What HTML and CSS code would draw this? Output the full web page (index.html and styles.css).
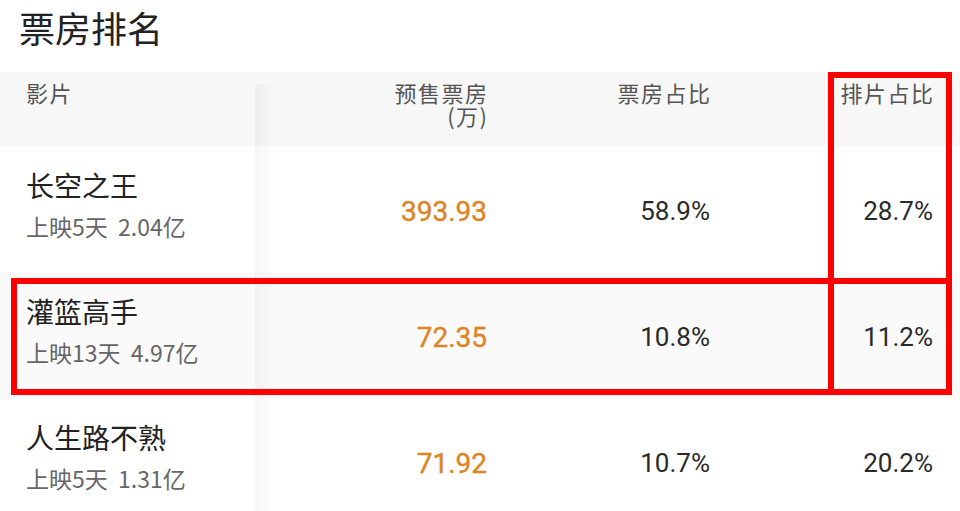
FILE: index.html
```html
<!DOCTYPE html>
<html lang="zh-CN">

<head>
    <meta charset="UTF-8">
    <meta name="viewport" content="width=device-width, initial-scale=1.0">
    <title>票房排名</title>
    <link rel="stylesheet" href="styles.css">
</head>

<body>
    <h1 class="title">票房排名</h1>

    <div class="rank-table">
        <div class="row head">
            <div class="cell name-col">影片</div>
            <div class="cell num-col">
                <span class="head-line">预售票房</span>
                <span class="head-line">(万)</span>
            </div>
            <div class="cell num-col">票房占比</div>
            <div class="cell num-col">排片占比</div>
        </div>

        <div class="row">
            <div class="cell name-col">
                <div class="movie">长空之王</div>
                <div class="meta">上映5天&nbsp; 2.04亿</div>
            </div>
            <div class="cell num-col presale">393.93</div>
            <div class="cell num-col pct">58.9%</div>
            <div class="cell num-col pct">28.7%</div>
        </div>

        <div class="row alt">
            <div class="cell name-col">
                <div class="movie">灌篮高手</div>
                <div class="meta">上映13天&nbsp; 4.97亿</div>
            </div>
            <div class="cell num-col presale">72.35</div>
            <div class="cell num-col pct">10.8%</div>
            <div class="cell num-col pct">11.2%</div>
        </div>

        <div class="row">
            <div class="cell name-col">
                <div class="movie">人生路不熟</div>
                <div class="meta">上映5天&nbsp; 1.31亿</div>
            </div>
            <div class="cell num-col presale">71.92</div>
            <div class="cell num-col pct">10.7%</div>
            <div class="cell num-col pct">20.2%</div>
        </div>

        <!-- red highlight marks drawn over the table -->
        <div class="mark mark-col"></div>
        <div class="mark mark-row"></div>
        <div class="mark mark-cell"></div>
    </div>
</body>

</html>
```

FILE: styles.css
```css
body {
    margin: 0;
    padding: 0;
    background: #FFF;
    font-family: "Noto Sans CJK SC", "Noto Sans", sans-serif;
    color: #222;
    overflow: hidden;
}

.title {
    margin: 0;
    padding: 0 0 0 19px;
    height: 72px;
    font-size: 36px;
    font-weight: 400;
    line-height: 54px;
    color: #222;
}

.rank-table {
    position: relative;
}

.row {
    display: grid;
    grid-template-columns: 255px 232px 223px 223px;
    padding-right: 27px;
    height: 126px;
}

.row.head {
    height: 74px;
    background: #F7F7F7;
}

.row.alt {
    background: #FAFAFA;
}

.cell {
    display: flex;
    align-items: center;
    justify-content: flex-end;
    text-align: right;
}

.name-col {
    position: relative;
    flex-direction: column;
    align-items: flex-start;
    justify-content: flex-start;
    padding: 20px 0 0 26px;
    text-align: left;
}

/* faint shadow of the fixed first column */
.name-col::after {
    content: "";
    position: absolute;
    top: 0;
    bottom: 0;
    right: -22px;
    width: 22px;
    background: linear-gradient(to right, rgba(0, 0, 0, 0.035), rgba(0, 0, 0, 0));
}

.head .cell {
    align-items: flex-start;
    padding-top: 8px;
    font-size: 22px;
    line-height: 24px;
    color: #555;
    letter-spacing: 1.5px;
    margin-right: -1.5px;
}

.head .num-col {
    flex-direction: column;
    align-items: flex-end;
    justify-content: flex-start;
}

.head-line {
    display: block;
    height: 23px;
}

.head .name-col {
    padding-top: 8px;
    margin-right: 0;
}

.head .name-col::after {
    top: 12px;
}

.movie {
    font-size: 28px;
    line-height: 38px;
    color: #222;
}

.meta {
    margin-top: 8px;
    font-size: 23px;
    line-height: 28px;
    color: #666;
}

.presale {
    font-family: Roboto, "Noto Sans", sans-serif;
    font-size: 28px;
    color: #DD8526;
    padding-top: 4px;
    -webkit-text-stroke: 0.4px #DD8526;
}

.pct {
    font-family: Roboto, "Noto Sans", sans-serif;
    font-size: 26px;
    color: #2A2A2A;
    padding-top: 4px;
}

.mark {
    position: absolute;
    box-sizing: border-box;
    border: 6px solid #F00;
}

.mark-col {
    left: 828px;
    top: 0;
    width: 124px;
    height: 212px;
}

.mark-row {
    left: 11px;
    top: 206px;
    width: 941px;
    height: 117px;
}

.mark-cell {
    left: 828px;
    top: 206px;
    width: 124px;
    height: 117px;
}
```
